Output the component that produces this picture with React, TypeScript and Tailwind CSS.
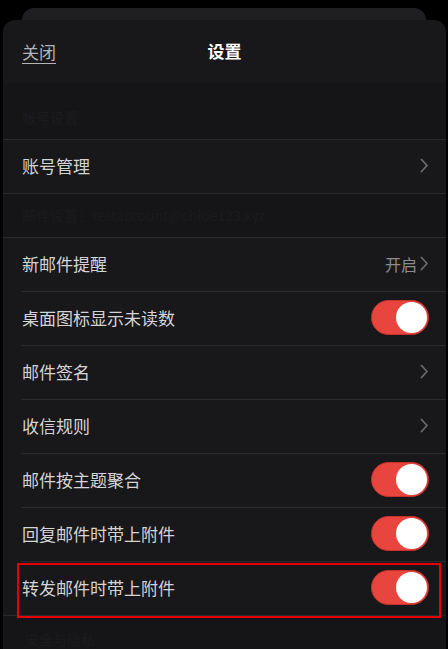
import { ReactNode } from "react";

const font = { fontFamily: '"Noto Sans CJK SC", "Noto Sans", sans-serif' };

function Chevron() {
  return (
    <svg width="9" height="15" viewBox="0 0 9 15" fill="none" className="shrink-0">
      <path d="M1.5 1.5 L7 7.5 L1.5 13.5" stroke="#6b6b6e" strokeWidth="1.8" strokeLinecap="round" strokeLinejoin="round" />
    </svg>
  );
}

function Toggle() {
  return (
    <div className="flex h-[35px] w-[58px] items-center justify-end rounded-full border border-[#c9302b] bg-[#e8453f] pr-[1px]">
      <div className="h-[31px] w-[31px] rounded-full bg-white" />
    </div>
  );
}

function Row({
  label,
  right,
  inset = true,
  highlight = false,
}: {
  label: string;
  right: ReactNode;
  inset?: boolean;
  highlight?: boolean;
}) {
  return (
    <div className="relative flex h-[54px] flex-col">
      <div className={`h-px bg-[#2a2a2d] ${inset ? "ml-[18px]" : ""}`} />
      <div className="flex flex-1 items-center justify-between pb-[2px] pl-[19px] pr-[17px]">
        <span className="text-[17px] leading-[24px] text-[#d4d4d6]">{label}</span>
        {right}
      </div>
      {highlight && (
        <div className="pointer-events-none absolute left-[14px] right-[5px] top-[2px] h-[55px] border-2 border-[#e60000]" />
      )}
    </div>
  );
}

export default function App() {
  return (
    <div className="h-[649px] overflow-hidden bg-black" style={font}>
      {/* card behind */}
      <div className="mx-[22px] mt-2 h-[12px] rounded-t-[12px] bg-[#1f1f21]" />

      {/* sheet */}
      <div className="ml-[3px] mr-[2px] h-[629px] rounded-t-[12px] bg-[#18181a]">
        <div className="relative flex h-[63px] items-center justify-center pb-[2px]">
          <span className="absolute left-[19px] top-[19px] text-[17px] text-[#b4b4b6] underline underline-offset-[4px]">
            关闭
          </span>
          <span className="text-[17px] font-bold text-white">设置</span>
        </div>

        <div className="flex h-[56px] items-end bg-[#151517] pb-[11px] pl-[19px]">
          <span className="text-[14px] text-[#1c1c1f]">帐号设置</span>
        </div>

        <Row label="账号管理" right={<Chevron />} inset={false} />
        <div className="h-px bg-[#2a2a2d]" />

        <div className="flex h-[43px] items-center bg-[#151517] pl-[19px]">
          <span className="text-[14px] text-[#1b1b1e]">邮件设置：testaccount@chloe123.xyz</span>
        </div>

        <Row
          label="新邮件提醒"
          inset={false}
          right={
            <div className="flex items-center gap-[3px]">
              <span className="text-[16px] text-[#8c8c8f]">开启</span>
              <Chevron />
            </div>
          }
        />
        <Row label="桌面图标显示未读数" right={<Toggle />} />
        <Row label="邮件签名" right={<Chevron />} />
        <Row label="收信规则" right={<Chevron />} />
        <Row label="邮件按主题聚合" right={<Toggle />} />
        <Row label="回复邮件时带上附件" right={<Toggle />} />
        <Row label="转发邮件时带上附件" right={<Toggle />} highlight />
        <div className="h-px bg-[#2a2a2d]" />

        <div className="flex h-[33px] items-end bg-[#151517] pl-[22px]">
          <span className="text-[14px] leading-[20px] text-[#1b1b1e]">安全与隐私</span>
        </div>
      </div>
    </div>
  );
}
